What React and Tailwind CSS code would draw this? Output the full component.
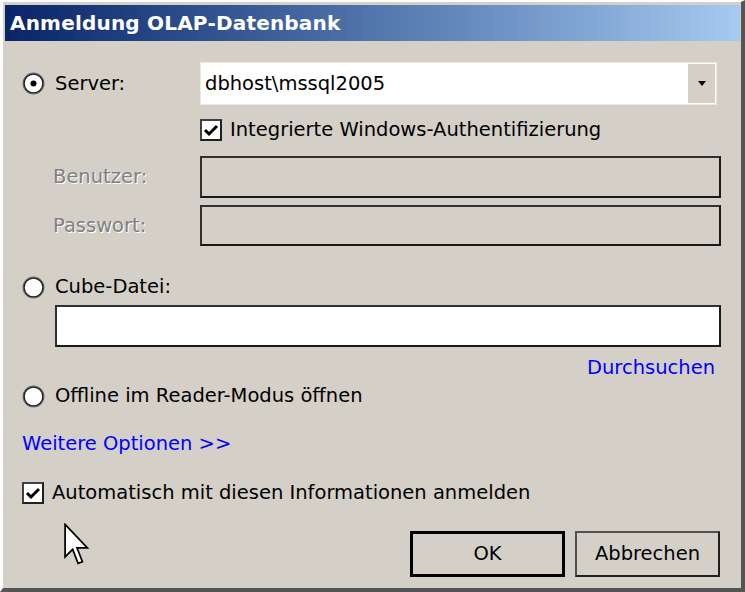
import React from "react";

const font = { fontFamily: '"DejaVu Sans", Verdana, sans-serif' };

// classic win2k radio button
const Radio = ({ checked }) => (
  <svg width="23" height="23" viewBox="0 0 23 23" className="shrink-0">
    <circle cx="11.5" cy="11.5" r="10.4" fill="#fff" stroke="#707070" strokeWidth="1.2" />
    <circle cx="11.5" cy="11.5" r="9.4" fill="#fff" stroke="#202020" strokeWidth="1.4" />
    {checked && <circle cx="11.5" cy="11.5" r="3" fill="#000" />}
  </svg>
);

const Check = () => (
  <div className="w-[22px] h-[22px] shrink-0 bg-white border-2 border-t-[#404040] border-l-[#404040] border-r-[#202020] border-b-[#202020] flex items-center justify-center">
    <svg width="16" height="14" viewBox="0 0 16 14">
      <path d="M2 7 L6 11 L14 3" fill="none" stroke="#000" strokeWidth="3" />
    </svg>
  </div>
);

const SunkenBox = ({ white }) => (
  <div
    className={`h-full w-full border-2 border-t-[#303030] border-l-[#303030] border-r-[#1a1a1a] border-b-[#1a1a1a] ${
      white ? "bg-white" : "bg-[#d4d0c8]"
    }`}
  />
);

export default function App() {
  return (
    <div
      className="relative w-[745px] h-[592px] bg-[#d4d0c8] border-t-2 border-l-[3px] border-t-white border-l-white border-r-[4px] border-b-[4px] border-r-[#555] border-b-[#555] text-[19.5px] text-black"
      style={font}
    >
      <div className="ml-[2px] mr-[1px] mt-[3px] h-[36px] flex items-center pl-[5px] bg-gradient-to-r from-[#0a246a] to-[#a6caf0]">
        <span className="text-white font-bold text-[20px] tracking-[0.2px]">Anmeldung OLAP-Datenbank</span>
      </div>

      <div className="pl-[19px] pr-[20px] flex flex-col">
        {/* server */}
        <div className="mt-[21px] h-[43px] flex items-center">
          <div className="w-[178px] flex items-center gap-[10px]">
            <Radio checked />
            <span>Server:</span>
          </div>
          <div className="flex-1 mr-[4px] h-full bg-white border border-[#ece9e0] flex items-center">
            <span className="pl-[4px] flex-1">dbhost\mssql2005</span>
            <div className="w-[27px] h-[39px] mr-[1px] bg-[#d4d0c8] flex items-center justify-center">
              <svg width="10" height="6" viewBox="0 0 10 6">
                <path d="M1 0 L9 0 L5 5 Z" fill="#000" />
              </svg>
            </div>
          </div>
        </div>

        <div className="mt-[14px] h-[22px] pl-[178px] flex items-center gap-[8px]">
          <Check />
          <span>Integrierte Windows-Authentifizierung</span>
        </div>

        <div className="mt-[15px] h-[42px] flex items-center">
          <span className="w-[178px] pl-[31px] text-[#808080] [text-shadow:1px_1px_0_#fff]">Benutzer:</span>
          <div className="flex-1 h-full">
            <SunkenBox />
          </div>
        </div>

        <div className="mt-[7px] h-[41px] flex items-center">
          <span className="w-[178px] pl-[31px] text-[#808080] [text-shadow:1px_1px_0_#fff]">Passwort:</span>
          <div className="flex-1 h-full">
            <SunkenBox />
          </div>
        </div>

        <div className="mt-[30px] h-[22px] flex items-center gap-[10px]">
          <Radio />
          <span>Cube-Datei:</span>
        </div>

        <div className="mt-[7px] h-[42px] ml-[33px]">
          <SunkenBox white />
        </div>

        <div className="mt-[11px] h-[20px] flex items-center justify-end pr-[6px]">
          <span className="text-[#0000ff]">Durchsuchen</span>
        </div>

        <div className="mt-[7px] h-[22px] flex items-center gap-[10px]">
          <Radio />
          <span>Offline im Reader-Modus öffnen</span>
        </div>

        <div className="mt-[27px] h-[20px] flex items-center">
          <span className="text-[#0000ff]">Weitere Optionen &gt;&gt;</span>
        </div>

        <div className="mt-[28px] h-[22px] flex items-center gap-[8px]">
          <Check />
          <span>Automatisch mit diesen Informationen anmelden</span>
        </div>

        <div className="mt-[27px] h-[46px] flex justify-end gap-[10px] pr-[1px]">
          <button className="w-[155px] h-full border-[3px] border-black bg-[#d4d0c8]">OK</button>
          <button className="w-[145px] h-full border-2 border-t-[#505050] border-l-[#505050] border-r-[#202020] border-b-[#202020] bg-[#d4d0c8]">
            Abbrechen
          </button>
        </div>
      </div>

      {/* mouse pointer */}
      <svg className="absolute left-[61px] top-[521px]" width="26" height="44" viewBox="0 0 12 20">
        <path
          d="M0.5 0.5 L0.5 15.5 L4 12 L6.5 18.5 L8.5 17.7 L6 11.3 L10.8 11.3 Z"
          fill="#fff"
          stroke="#000"
          strokeWidth="0.8"
          strokeLinejoin="miter"
        />
      </svg>
    </div>
  );
}
